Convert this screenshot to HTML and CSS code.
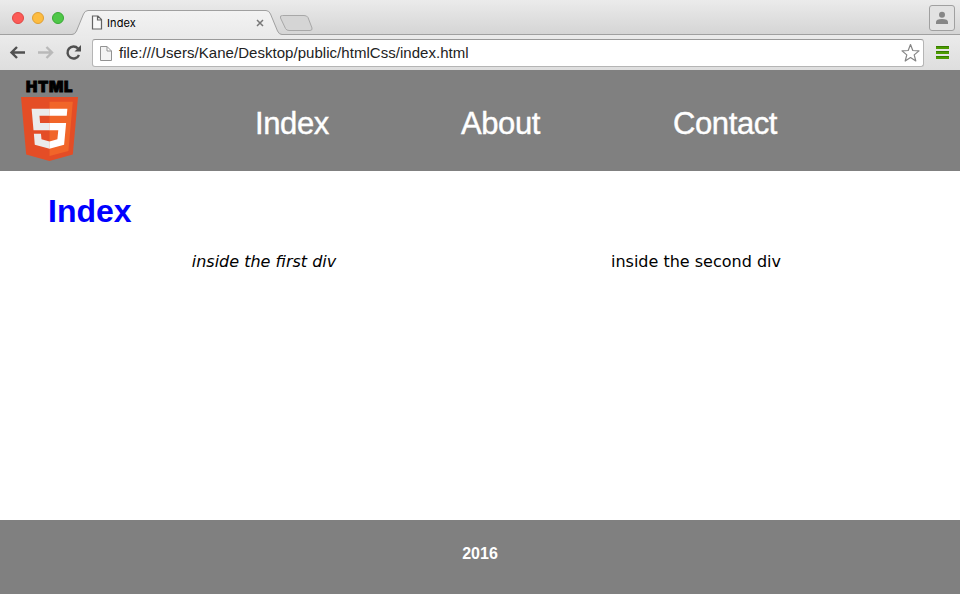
FILE: index.html
```html
<!DOCTYPE html>
<html lang="en">
<head>
<meta charset="utf-8">
<title>Index</title>
<link rel="stylesheet" href="styles.css">
</head>
<body>
<div class="window">
  <div class="tabstrip">
    <div class="lights"><i class="red"></i><i class="yellow"></i><i class="green"></i></div>
    <div class="tab">
      <svg class="tab-shape" width="250" height="36" viewBox="0 0 250 36">
        <defs><linearGradient id="tabfill" x1="0" y1="0" x2="0" y2="1"><stop offset="0" stop-color="#f3f3f3"/><stop offset="1" stop-color="#eaeaea"/></linearGradient></defs>
        <path d="M3 36V34.500Q6 34.500 7.500 31L14.500 14Q16 10.500 19 10.500H197Q200 10.500 201.500 14L208.500 31Q210 34.500 213 34.500V36Z" fill="url(#tabfill)"/>
        <path d="M0 34.500H3Q6 34.500 7.500 31L14.500 14Q16 10.500 19 10.500H197Q200 10.500 201.500 14L208.500 31Q210 34.500 213 34.500H250" fill="none" stroke="#a0a0a0"/>
        <path d="M213.500 15.500H235Q238 15.500 239 17.500L243 28Q243.500 30.500 241 30.500H220Q217.500 30.500 216.500 28.500L211.500 18Q210.500 15.500 213.500 15.500Z" fill="#d5d5d5" stroke="#a8a8a8"/>
      </svg>
      <svg class="page-icon" width="12" height="15" viewBox="0 0 12 15"><path d="M1.500 1H7L10.500 4.500V14H1.500ZM6.500 1V5H10.500" fill="#f8f8f8" stroke="#636363" stroke-width="1.200"/></svg>
      <span class="tab-title">Index</span>
      <svg class="close" width="8" height="8" viewBox="0 0 8 8"><path d="M1 1L7 7M7 1L1 7" stroke="#777" stroke-width="1.500"/></svg>
    </div>
    <div class="profile"><svg width="14" height="14" viewBox="0 0 14 14"><circle cx="7" cy="3.800" r="3" fill="#868686"/><path d="M1 13V11Q1 8 7 8Q13 8 13 11V13Z" fill="#868686"/></svg></div>
  </div>
  <div class="toolbar">
    <svg class="nav-icons" width="92" height="34" viewBox="0 0 92 34" fill="none">
      <path d="M25 17.500H12M17 12L11.500 17.500L17 23" stroke="#505050" stroke-width="2.400"/>
      <path d="M38 17.500H51M46.500 12L52 17.500L46.500 23" stroke="#b9b9b9" stroke-width="2.400"/>
      <path d="M78 13.500A6 6 0 1 0 79 20" stroke="#505050" stroke-width="2.400"/><path d="M81 10V16.500H74.500Z" fill="#505050"/>
    </svg>
    <div class="address">
      <svg width="14" height="17" viewBox="0 0 14 17"><path d="M1.500 1.500H8L12.500 6V15.500H1.500ZM8 1.500V6H12.500" fill="#f3f3f3" stroke="#929292"/></svg>
      <span class="url">file:///Users/Kane/Desktop/public/htmlCss/index.html</span>
      <svg class="star" width="20" height="20" viewBox="0 0 20 20"><path d="M9.500 1.500L11.800 7.500L18 7.900L13.200 11.900L14.800 18L9.500 14.600L4.200 18L5.800 11.900L1 7.900L7.200 7.500Z" fill="#fff" stroke="#858585" stroke-width="1.200" stroke-linejoin="round"/></svg>
    </div>
    <div class="menu"><i></i><i></i><i></i></div>
  </div>
  <header class="site-nav">
    <div class="logo">
      <span class="logo-word">HTML</span>
      <svg width="57" height="64" viewBox="30 0 451 512" preserveAspectRatio="none">
        <path fill="#e44d26" d="M71 460L30 0H481L440 460L255 512Z"/>
        <path fill="#f16529" d="M256 472L405 431L440 37H256Z"/>
        <path fill="#ebebeb" d="M256 208H181L176 150H256V94H114L129 265H256ZM256 355L192 338L188 293H132L139 382L256 414Z"/>
        <path fill="#fff" d="M255 208V265H325L318 338L255 355V414L371 382L387 208ZM255 94V150H392L397 94Z"/>
      </svg>
    </div>
    <a class="link-index">Index</a><a class="link-about">About</a><a class="link-contact">Contact</a>
  </header>
  <main>
    <h1>Index</h1>
    <div class="columns"><div class="first"><span>inside the first div</span></div><div class="second"><span>inside the second div</span></div></div>
  </main>
  <footer>2016</footer>
</div>
</body>
</html>
```
FILE: styles.css
```css
* { box-sizing: border-box; }
body { margin: 0; background: #fff; font-family: "Liberation Sans", Arial, sans-serif; }
.window { width: 960px; height: 594px; display: flex; flex-direction: column; overflow: hidden; }
svg { display: block; flex: none; }
.tabstrip { height: 35px; flex: none; display: flex; position: relative; background: linear-gradient(#ebebeb, #d5d5d5); border-bottom: 1px solid #a0a0a0; }
.lights { width: 74px; padding: 12px 0 0 12px; display: flex; gap: 8px; }
.lights i { width: 12px; height: 12px; border-radius: 50%; border: 1px solid; }
.lights .red { background: #fc5b57; border-color: #df4744; }
.lights .yellow { background: #fdbc40; border-color: #de9f34; }
.lights .green { background: #4fc748; border-color: #38a934; }
.tab { position: relative; width: 250px; height: 36px; display: flex; padding-left: 17px; }
.tab-shape { position: absolute; left: -5px; top: 0; }
.page-icon { position: relative; margin-top: 15px; }
.tab-title { position: relative; margin: 16px 0 0 4px; font: 11px/14px Inter, sans-serif; letter-spacing: .1px; width: 149px; color: #000; }
.close { position: relative; margin-top: 19px; }
.profile { width: 26px; height: 26px; margin: 5px 5px 0 auto; border: 1px solid #a0a0a0; border-radius: 3px; background: #e2e2e2; display: flex; align-items: center; justify-content: center; }
.toolbar { height: 35px; flex: none; display: flex; background: linear-gradient(#ebebeb, #dedede); }
.address { width: 832px; height: 28px; margin-top: 4px; background: #fff; border: 1px solid #b5b5b5; border-top-color: #999; border-radius: 3px; display: flex; align-items: center; padding: 0 2px 0 6px; }
.url { margin: 0 0 2px 6px; font-size: 15px; letter-spacing: .04px; color: #222; white-space: nowrap; }
.star { margin-left: auto; }
.menu { margin: 11px 0 0 12px; display: flex; flex-direction: column; gap: 2px; }
.menu i { width: 13px; height: 3px; background: #4c9b00; border-top: 1px solid #377b00; }
.site-nav { height: 101px; flex: none; background: #808080; display: flex; color: #fff; font-size: 31px; }
.site-nav a { line-height: 36px; margin-top: 36px; letter-spacing: -.4px; -webkit-text-stroke: .4px #fff; }
.logo { width: 255px; padding: 10px 0 0 21px; }
.logo-word { display: block; width: 57px; height: 17px; margin-left: 5px; font: 900 15px/14px Inter, sans-serif; letter-spacing: .7px; color: #000; -webkit-text-stroke: .9px #000; }
.link-index { width: 206px; }
.link-about { width: 212px; }
main { height: 349px; flex: none; padding: 21px 48px 0; }
h1 { margin: 0; font-size: 32px; line-height: 38px; color: #00f; }
.columns { display: grid; grid-template-columns: 1fr 1fr; margin-top: 22px; font: 16px/20px "DejaVu Sans", Verdana, sans-serif; text-align: center; color: #000; }
.first { font-style: italic; }
footer { flex: 1; background: #808080; color: #fff; font-size: 16px; font-weight: bold; line-height: 18px; padding-top: 25px; text-align: center; }
```
